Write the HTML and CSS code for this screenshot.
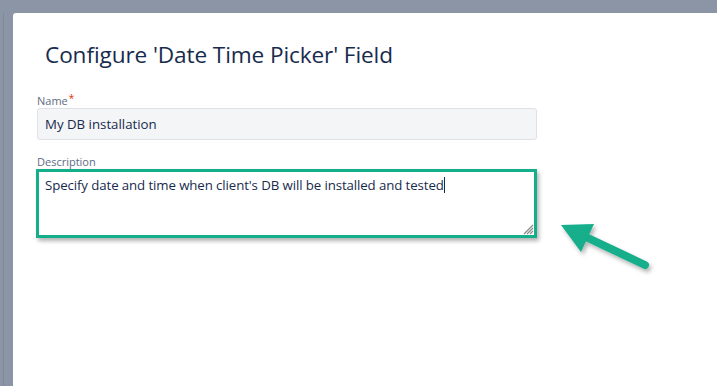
FILE: index.html
```html
<!DOCTYPE html>
<html>
<head>
<meta charset="utf-8">
<link rel="stylesheet" href="styles.css">
</head>
<body>
<div class="backdrop">
  <div class="side"></div>
  <div class="modal">
    <h1 class="title">Configure 'Date Time Picker' Field</h1>
    <div class="field">
      <label class="label">Name<span class="req">*</span></label>
      <div class="input">My DB installation</div>
    </div>
    <div class="field desc">
      <label class="label">Description</label>
      <div class="textarea">
        <span class="ta-text">Specify date and time when client's DB will be installed and tested</span><span class="caret"></span>
        <svg class="grip" width="12" height="12" viewBox="0 0 12 12"><path d="M11 2 L2 11 M11 5 L5 11 M11 8 L8 11" stroke="#888" stroke-width="1.2" fill="none"/></svg>
      </div>
    </div>
    <svg class="arrow" width="125" height="90" viewBox="0 0 125 90">
      <defs><filter id="sh" x="-20%" y="-20%" width="150%" height="160%"><feDropShadow dx="2" dy="3" stdDeviation="2" flood-color="#000" flood-opacity="0.3"/></filter></defs>
      <g filter="url(#sh)">
        <line x1="105" y1="70" x2="48" y2="43" stroke="#15ae8b" stroke-width="8" stroke-linecap="round"/>
        <polygon points="21,30 54,29 41,57" fill="#15ae8b"/>
      </g>
    </svg>
  </div>
</div>
</body>
</html>
```
FILE: styles.css
```css
* { box-sizing: border-box; }
html, body { margin: 0; padding: 0; }
body { width: 717px; height: 386px; overflow: hidden; font-family: "Open Sans", "Noto Sans", sans-serif; }
.backdrop { display: flex; width: 717px; height: 386px; background: #8b95a5; padding-top: 13px; padding-left: 3px; }
.side { width: 10px; border-left: 1px solid #7f899a; }
.modal { position: relative; flex: 1; background: #fff; border-top-left-radius: 3px; padding: 27px 0 0 24px; }
.title { margin: 0 0 24px 8px; font-weight: 400; font-size: 22.6px; line-height: 30px; color: #172b4d; letter-spacing: -0.1px; }
.field { width: 500px; }
.label { display: block; font-size: 11px; line-height: 14px; color: #5e6c84; }
.req { color: #de350b; font-size: 10px; vertical-align: top; position: relative; top: -3px; margin-left: 1px; }
.input { margin-top: 0; height: 32px; background: #f4f5f7; border: 1px solid #dfe1e6; border-radius: 3px; padding: 6px 7px; font-size: 13.25px; line-height: 18px; color: #172b4d; }
.desc { margin-top: 15px; }
.textarea { position: relative; margin-top: 0; height: 69px; width: 501px; margin-left: -1px; border: 3px solid #15ae8b; background: #fff; padding: 4px 6px; font-size: 13.25px; line-height: 18px; color: #172b4d; box-shadow: 2px 3px 4px rgba(0,0,0,0.3); letter-spacing: -0.1px; }
.caret { display: inline-block; width: 1px; height: 16px; background: #172b4d; vertical-align: -3px; }
.grip { position: absolute; right: 0; bottom: 0; }
.arrow { position: absolute; left: 527px; top: 182px; }
```
